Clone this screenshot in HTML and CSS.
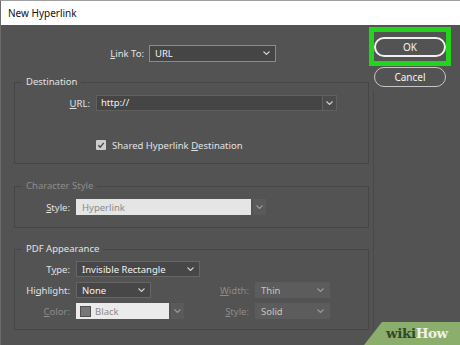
FILE: index.html
```html
<!DOCTYPE html>
<html lang="en">
<head>
  <meta charset="UTF-8" />
  <title>New Hyperlink</title>
  <link rel="stylesheet" href="styles.css">
</head>
<body>
  <div class="window">
    <div class="titlebar">New Hyperlink</div>
    <div class="dialog">
      <div class="main">
        <div class="row linkto">
          <span class="lbl lbl-link"><u>L</u>ink To:</span>
          <div class="select select-focus w-link">
            <span>URL</span>
            <svg class="chev" viewBox="0 0 7 4"><polyline points="0.5,0.5 3.5,3.5 6.5,0.5"/></svg>
          </div>
        </div>

        <fieldset class="group group-dest">
          <legend>Destination</legend>
          <div class="row">
            <span class="lbl lbl-url"><u>U</u>RL:</span>
            <div class="combo w-url">
              <span class="combo-text">http://</span>
              <span class="combo-btn"><svg class="chev" viewBox="0 0 7 4"><polyline points="0.5,0.5 3.5,3.5 6.5,0.5"/></svg></span>
            </div>
          </div>
          <div class="check-row">
            <span class="checkbox">
              <svg viewBox="0 0 10 10"><polyline points="2.3,5.2 4.2,7.1 7.8,2.9"/></svg>
            </span>
            <span>Shared Hyperlink <u>D</u>estination</span>
          </div>
        </fieldset>

        <fieldset class="group group-char">
          <legend class="off">Character Style</legend>
          <div class="row">
            <span class="lbl"><u>S</u>tyle:</span>
            <div class="field-off w-style">Hyperlink</div>
            <span class="arrow-off"><svg class="chev" viewBox="0 0 7 4"><polyline points="0.5,0.5 3.5,3.5 6.5,0.5"/></svg></span>
          </div>
        </fieldset>

        <fieldset class="group group-pdf">
          <legend>PDF Appearance</legend>
          <div class="pdf-grid">
            <span class="lbl">T<u>y</u>pe:</span>
            <div class="select w-type span3">
              <span>Invisible Rectangle</span>
              <svg class="chev" viewBox="0 0 7 4"><polyline points="0.5,0.5 3.5,3.5 6.5,0.5"/></svg>
            </div>

            <span class="lbl">Hi<u>g</u>hlight:</span>
            <div class="select w-small">
              <span>None</span>
              <svg class="chev" viewBox="0 0 7 4"><polyline points="0.5,0.5 3.5,3.5 6.5,0.5"/></svg>
            </div>
            <span class="lbl off"><u>W</u>idth:</span>
            <div class="select select-off w-small">
              <span>Thin</span>
              <svg class="chev" viewBox="0 0 7 4"><polyline points="0.5,0.5 3.5,3.5 6.5,0.5"/></svg>
            </div>

            <span class="lbl off"><u>C</u>olor:</span>
            <div class="color-cell">
              <div class="field-off w-color"><span class="swatch"></span>Black</div>
              <span class="arrow-off"><svg class="chev" viewBox="0 0 7 4"><polyline points="0.5,0.5 3.5,3.5 6.5,0.5"/></svg></span>
            </div>
            <span class="lbl off"><u>S</u>tyle:</span>
            <div class="select select-off w-small">
              <span>Solid</span>
              <svg class="chev" viewBox="0 0 7 4"><polyline points="0.5,0.5 3.5,3.5 6.5,0.5"/></svg>
            </div>
          </div>
        </fieldset>
      </div>

      <div class="side">
        <div class="marker">
          <button class="btn btn-default">OK</button>
        </div>
        <button class="btn btn-cancel">Cancel</button>
        <div class="side-rule"></div>
      </div>
    </div>
  </div>

  <div class="wikihow"><span class="wiki">wiki</span><span class="how">How</span></div>
</body>
</html>
```

FILE: styles.css
```css
body {
  margin: 0;
  width: 460px;
  height: 345px;
  overflow: hidden;
  background: #535353;
  font-family: "Noto Sans", "Open Sans", sans-serif;
  font-size: 9.5px;
  color: #e2e2e2;
}
u {
  text-decoration-thickness: 1px;
  text-underline-offset: 1px;
}
.window {
  height: 345px;
  box-sizing: border-box;
  border-top: 1px solid #a0a0a0;
  border-left: 1px solid #6c6c6c;
}
.titlebar {
  height: 24px;
  line-height: 24px;
  padding-left: 7px;
  background: #fff;
  color: #111;
  font-size: 10px;
}
.dialog {
  display: flex;
}
.main {
  width: 355px;
  padding: 20px 0 0 13px;
}
.row {
  display: flex;
  align-items: center;
  height: 16px;
}
.lbl {
  width: 55px;
  margin-right: 6px;
  text-align: right;
  white-space: nowrap;
}
.lbl-link {
  width: 130px;
  margin-right: 5px;
}
.lbl-url {
  width: 75px;
  margin-right: 6px;
}
.off {
  color: #8c8c8c;
}

/* dropdowns */
.select {
  display: flex;
  align-items: center;
  justify-content: space-between;
  box-sizing: border-box;
  height: 16px;
  padding: 0 5px 0 5px;
  background: #474747;
  border: 1px solid #666;
  color: #f2f2f2;
}
.select-focus {
  height: 17px;
  border-color: #7291ad;
  background: #454545;
}
.select-off {
  background: #5c5c5c;
  border-color: #5c5c5c;
  color: #c4c4c4;
}
.chev {
  width: 7px;
  height: 4px;
  fill: none;
  stroke: #d0d0d0;
  stroke-width: 1.1;
}
.select-off .chev,
.arrow-off .chev {
  stroke: #9a9a9a;
}
.w-link { width: 127px; }
.w-type { width: 124px; }
.w-small { width: 75px; }

/* combo with text field */
.combo {
  display: flex;
  box-sizing: border-box;
  height: 16px;
  border: 1px solid #606060;
  background: #454545;
}
.w-url { width: 241px; }
.combo-text {
  flex: 1;
  padding-left: 4px;
  line-height: 14px;
  color: #f2f2f2;
}
.combo-btn {
  display: flex;
  align-items: center;
  justify-content: center;
  width: 13px;
  border-left: 1px solid #606060;
  background: #4b4b4b;
}

/* group boxes */
.group {
  margin: 0;
  padding: 0;
  border: 1px solid #464646;
  box-sizing: border-box;
  width: 355px;
}
.group legend {
  margin-left: 7px;
  padding: 0 4px;
  line-height: 12px;
  font-size: 9.5px;
}
.group-dest {
  margin-top: 15px;
  padding: 7px 0 13px;
}
.group-char {
  margin-top: 16px;
  padding: 7px 0 12px;
}
.group-pdf {
  margin-top: 15px;
  padding: 6px 0 10px;
}

.check-row {
  display: flex;
  align-items: center;
  gap: 6px;
  margin: 29px 0 0 81px;
  height: 10px;
}
.checkbox {
  width: 10px;
  height: 10px;
  border-radius: 1px;
  background: #cfcfcf;
}
.checkbox svg {
  display: block;
  width: 10px;
  height: 10px;
  fill: none;
  stroke: #4a4a4a;
  stroke-width: 1.4;
}

/* disabled light fields */
.field-off {
  display: flex;
  align-items: center;
  box-sizing: border-box;
  height: 16px;
  padding-left: 6px;
  background: #e5e5e5;
  color: #8a8a8a;
}
.w-style { width: 175px; }
.w-color {
  width: 93px;
  padding-left: 4px;
  background: #ebebeb;
}
.arrow-off {
  display: flex;
  align-items: center;
  justify-content: center;
  width: 13px;
  height: 16px;
  margin-left: 2px;
  background: #5a5a5a;
}
.swatch {
  width: 9px;
  height: 9px;
  margin-right: 4px;
  background: #777;
  border: 1px solid #505050;
}
.color-cell {
  display: flex;
}

.pdf-grid {
  display: grid;
  grid-template-columns: 55px 112px 55px 75px;
  grid-auto-rows: 16px;
  column-gap: 6px;
  row-gap: 5px;
  align-items: center;
}
.pdf-grid .lbl {
  width: auto;
  margin: 0;
}
.span3 {
  grid-column: 2 / 5;
  justify-self: start;
}

/* buttons */
.side {
  display: flex;
  flex-direction: column;
  padding-top: 2px;
}
.marker {
  width: 82px;
  box-sizing: border-box;
  border: 5px solid #22d41c;
  padding: 5px 0 4px;
}
.btn {
  display: block;
  width: 72px;
  height: 20px;
  box-sizing: border-box;
  border-radius: 10px;
  background: #535353;
  color: #f4f4f4;
  font-family: "Noto Sans", "Open Sans", sans-serif;
  font-size: 10px;
  padding: 0;
}
.btn-default {
  border: 2px solid #f0f0f0;
}
.btn-cancel {
  margin: 1px 0 0 5px;
  border: 1px solid #c6c6c6;
}
.side-rule {
  flex: 1;
  margin: 3px 0 0 4px;
  border-left: 1px solid #494949;
}

/* watermark */
.wikihow {
  position: absolute;
  right: 0;
  bottom: 0;
  width: 96px;
  height: 23px;
  box-sizing: border-box;
  padding: 3px 0 0 22px;
  background: #8cae6c;
  clip-path: polygon(18px 0, 100% 0, 100% 100%, 0 100%);
  font-family: "DejaVu Serif", "Liberation Serif", serif;
  font-weight: bold;
  font-size: 13.5px;
  letter-spacing: -0.4px;
}
.wiki { color: #2f4a2a; }
.how { color: #eef2e8; }
```
